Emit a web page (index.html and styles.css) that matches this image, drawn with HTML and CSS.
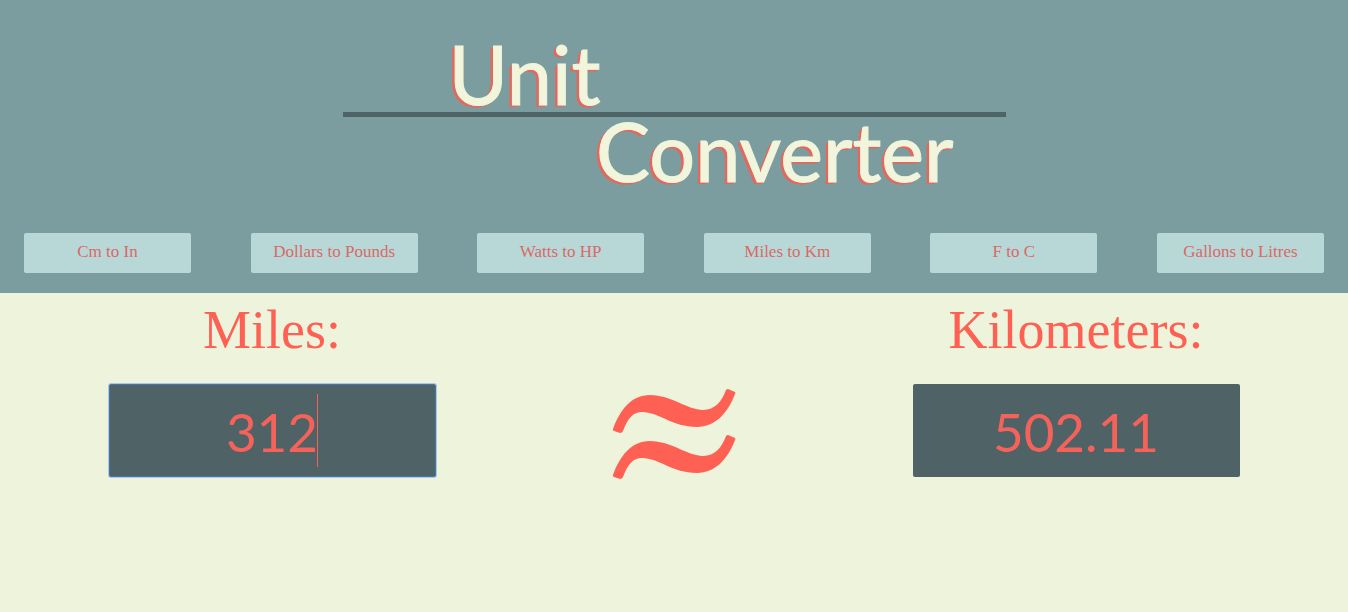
FILE: index.html
```html
<!DOCTYPE html>
<html lang="en">
<head>
<meta charset="utf-8">
<title>Unit Converter</title>
<link rel="stylesheet" href="styles.css">
</head>
<body>
<header class="header">
  <h1 class="title">
    <span class="title-first">Unit</span>
    <span class="title-second">Converter</span>
  </h1>
  <nav class="units">
    <button class="unit" type="button">Cm to In</button>
    <button class="unit" type="button">Dollars to Pounds</button>
    <button class="unit" type="button">Watts to HP</button>
    <button class="unit" type="button">Miles to Km</button>
    <button class="unit" type="button">F to C</button>
    <button class="unit" type="button">Gallons to Litres</button>
  </nav>
</header>
<main class="converter">
  <div class="field">
    <label class="label" for="miles">Miles:</label>
    <div class="entry">
      <input class="value active" id="miles" type="text" inputmode="decimal" value="312">
      <span class="caret" aria-hidden="true"></span>
    </div>
  </div>
  <svg class="approx" viewBox="0 0 124 92" role="img" aria-label="approximately equals">
    <path id="wave" d="M1 41 Q0 42 2 43 L8 45 Q10 45 11 43 C16 30 21 24 30 24 C47 24 60 39 85 39 C103 39 116 25 123 6 Q124 5 123 4 L116 1 Q115 1 114 2 C110 13 103 22 91 22 C76 22 59 7 38 7 C19 7 8 22 1 41 Z"/>
    <use href="#wave" y="46"/>
  </svg>
  <div class="field">
    <label class="label" for="kilometers">Kilometers:</label>
    <div class="entry">
      <input class="value" id="kilometers" type="text" inputmode="decimal" value="502.11">
    </div>
  </div>
</main>
</body>
</html>
```
FILE: styles.css
```css
* {
  box-sizing: border-box;
}

body {
  margin: 0;
  min-height: 100vh;
  background: #eef4db;
  color: #ff6054;
  font-family: Lato, sans-serif;
}

.header {
  padding: 36px 24px 20px;
  background: #7b9d9f;
}

.title {
  display: flex;
  flex-direction: column;
  width: 51%;
  margin: 0 auto 49px;
  color: #f0f5dc;
  font-size: 81px;
  font-weight: 400;
  line-height: 76px;
  text-shadow: -1px 1px #e2695f, -2px 2px #e2695f, -3px 2px #e2695f;
  -webkit-text-stroke: 1px #f0f5dc;
}

.title-first {
  padding-left: 106px;
  border-bottom: 5px solid #4f6467;
}

.title-second {
  padding-right: 52px;
  line-height: 67px;
  text-align: right;
}

.units {
  display: flex;
  justify-content: space-between;
  gap: 16px;
}

.unit {
  flex: 0 1 167px;
  height: 40px;
  padding: 0 0 3px;
  border: 0;
  border-radius: 2px;
  background: #b7d8d7;
  color: #dc6866;
  font-family: "Liberation Serif", serif;
  font-size: 17px;
  white-space: nowrap;
  cursor: pointer;
}

.converter {
  display: grid;
  grid-template-columns: repeat(3, 1fr);
  justify-items: center;
  align-items: end;
  padding: 7px 71px 0;
}

.field {
  display: flex;
  flex-direction: column;
  align-items: center;
  gap: 24px;
}

.label {
  font-family: "Liberation Serif", serif;
  font-size: 54px;
  line-height: 60px;
}

.entry {
  position: relative;
}

.value {
  display: block;
  width: 327px;
  height: 93px;
  padding: 2px 8px 0;
  border: 0;
  border-radius: 2px;
  outline: 0;
  background: #4f6266;
  color: #f5625a;
  font-family: inherit;
  font-size: 53px;
  text-align: center;
  caret-color: transparent;
}

.active {
  border: 1px solid #4a74a8;
  box-shadow: 0 0 0 1px #a9c8e6;
  padding: 1px 7px 0;
}

.caret {
  position: absolute;
  top: 10px;
  left: calc(50% + 45px);
  width: 1px;
  height: 73px;
  background: #f5625a;
}

.approx {
  width: 124px;
  height: 92px;
  margin-bottom: -3px;
  fill: #ff6054;
}
```
